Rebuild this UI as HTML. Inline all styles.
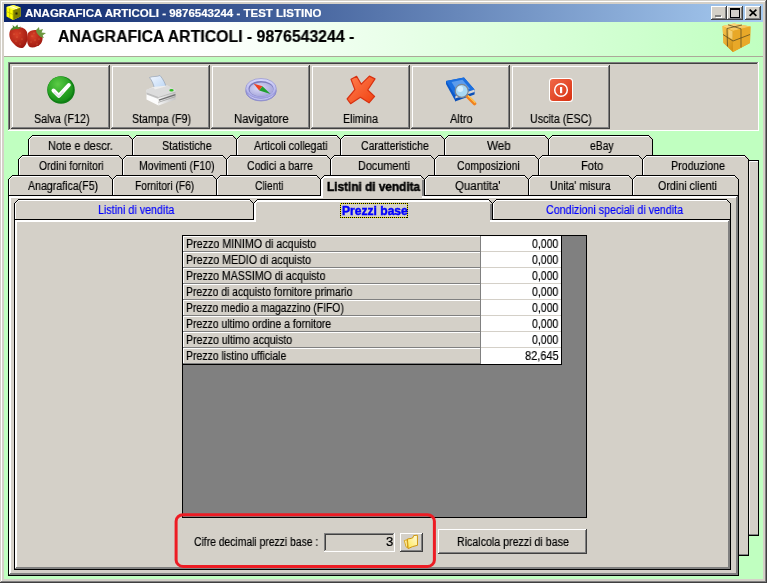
<!DOCTYPE html>
<html><head><meta charset="utf-8"><title>ANAGRAFICA ARTICOLI</title>
<style>
html,body{margin:0;padding:0;}
body{width:767px;height:583px;position:relative;overflow:hidden;background:#D4D0C8;font-family:'Liberation Sans', sans-serif;}
#frame{position:absolute;left:0;top:0;}
.t{position:absolute;white-space:pre;transform-origin:0 0;will-change:transform;-webkit-text-stroke:0.18px currentColor;}
#title{position:absolute;left:4px;top:4px;width:759px;height:18px;background:linear-gradient(90deg,#0A246A 0%,#A6CAF0 100%);}
#header{position:absolute;left:4px;top:22px;width:759px;height:34px;background:linear-gradient(90deg,#FFFFFF 0%,#FFFFFF 25%,#C0FFC0 100%);}
.ic{position:absolute;}
</style></head>
<body>
<svg id="frame" width="767" height="583" viewBox="0 0 767 583" shape-rendering="crispEdges">
<rect x="0" y="0" width="767" height="583" fill="#D4D0C8"/>
<rect x="1" y="1" width="765" height="1" fill="#fff"/>
<rect x="1" y="1" width="1" height="581" fill="#fff"/>
<rect x="0" y="582" width="767" height="1" fill="#404040"/>
<rect x="766" y="0" width="1" height="583" fill="#404040"/>
<rect x="1" y="581" width="765" height="1" fill="#808080"/>
<rect x="765" y="1" width="1" height="581" fill="#808080"/>
<rect x="4" y="57" width="759" height="522" fill="#C0FFC0"/>
<rect x="4" y="56" width="759" height="1" fill="#ACA899"/>
<rect x="8" y="62" width="751" height="69" fill="#D4D0C8"/>
<rect x="8" y="62" width="751" height="1" fill="#808080"/>
<rect x="8" y="62" width="1" height="69" fill="#808080"/>
<rect x="9" y="63" width="749" height="1" fill="#404040"/>
<rect x="9" y="63" width="1" height="67" fill="#404040"/>
<rect x="8" y="130" width="751" height="1" fill="#fff"/>
<rect x="758" y="62" width="1" height="69" fill="#fff"/>
<rect x="9" y="129" width="749" height="1" fill="#D4D0C8"/>
<rect x="757" y="63" width="1" height="67" fill="#D4D0C8"/>
<rect x="12" y="66" width="1" height="62" fill="#fff"/>
<rect x="12" y="66" width="97" height="1" fill="#fff"/>
<rect x="11" y="128" width="99" height="1" fill="#404040"/>
<rect x="109" y="65" width="1" height="64" fill="#404040"/>
<rect x="12" y="127" width="97" height="1" fill="#808080"/>
<rect x="108" y="66" width="1" height="62" fill="#808080"/>
<rect x="112" y="66" width="1" height="62" fill="#fff"/>
<rect x="112" y="66" width="97" height="1" fill="#fff"/>
<rect x="111" y="128" width="99" height="1" fill="#404040"/>
<rect x="209" y="65" width="1" height="64" fill="#404040"/>
<rect x="112" y="127" width="97" height="1" fill="#808080"/>
<rect x="208" y="66" width="1" height="62" fill="#808080"/>
<rect x="212" y="66" width="1" height="62" fill="#fff"/>
<rect x="212" y="66" width="97" height="1" fill="#fff"/>
<rect x="211" y="128" width="99" height="1" fill="#404040"/>
<rect x="309" y="65" width="1" height="64" fill="#404040"/>
<rect x="212" y="127" width="97" height="1" fill="#808080"/>
<rect x="308" y="66" width="1" height="62" fill="#808080"/>
<rect x="312" y="66" width="1" height="62" fill="#fff"/>
<rect x="312" y="66" width="97" height="1" fill="#fff"/>
<rect x="311" y="128" width="99" height="1" fill="#404040"/>
<rect x="409" y="65" width="1" height="64" fill="#404040"/>
<rect x="312" y="127" width="97" height="1" fill="#808080"/>
<rect x="408" y="66" width="1" height="62" fill="#808080"/>
<rect x="412" y="66" width="1" height="62" fill="#fff"/>
<rect x="412" y="66" width="97" height="1" fill="#fff"/>
<rect x="411" y="128" width="99" height="1" fill="#404040"/>
<rect x="509" y="65" width="1" height="64" fill="#404040"/>
<rect x="412" y="127" width="97" height="1" fill="#808080"/>
<rect x="508" y="66" width="1" height="62" fill="#808080"/>
<rect x="512" y="66" width="1" height="62" fill="#fff"/>
<rect x="512" y="66" width="97" height="1" fill="#fff"/>
<rect x="511" y="128" width="99" height="1" fill="#404040"/>
<rect x="609" y="65" width="1" height="64" fill="#404040"/>
<rect x="512" y="127" width="97" height="1" fill="#808080"/>
<rect x="608" y="66" width="1" height="62" fill="#808080"/>
<rect x="740" y="160" width="19" height="376" fill="#D4D0C8"/>
<rect x="740" y="160" width="19" height="1" fill="#000"/>
<rect x="758" y="160" width="1" height="376" fill="#000"/>
<rect x="740" y="535" width="19" height="1" fill="#000"/>
<rect x="749" y="161" width="9" height="1" fill="#fff"/>
<rect x="749" y="161" width="1" height="374" fill="#F0EEEA"/>
<rect x="730" y="170" width="19" height="386" fill="#D4D0C8"/>
<rect x="748" y="159" width="1" height="397" fill="#000"/>
<rect x="730" y="555" width="19" height="1" fill="#000"/>
<rect x="739" y="554" width="9" height="1" fill="#808080"/>
<rect x="749" y="534" width="9" height="1" fill="#808080"/>
<path d="M28,162 L28,139 L32,135 L129,135 L133,139 L133,162Z" fill="#D4D0C8" stroke="none"/>
<path d="M29.5,156 L29.5,139.5 L32.5,136.5 L128.5,136.5" stroke="#fff" fill="none" stroke-width="1" shape-rendering="crispEdges"/>
<path d="M28.5,156 L28.5,139.5 L32.5,135.5 L128.5,135.5 L132.5,139.5 L132.5,156" stroke="#000" fill="none" stroke-width="1" />
<path d="M132,162 L132,139 L136,135 L233,135 L237,139 L237,162Z" fill="#D4D0C8" stroke="none"/>
<path d="M133.5,156 L133.5,139.5 L136.5,136.5 L232.5,136.5" stroke="#fff" fill="none" stroke-width="1" shape-rendering="crispEdges"/>
<path d="M132.5,156 L132.5,139.5 L136.5,135.5 L232.5,135.5 L236.5,139.5 L236.5,156" stroke="#000" fill="none" stroke-width="1" />
<path d="M236,162 L236,139 L240,135 L337,135 L341,139 L341,162Z" fill="#D4D0C8" stroke="none"/>
<path d="M237.5,156 L237.5,139.5 L240.5,136.5 L336.5,136.5" stroke="#fff" fill="none" stroke-width="1" shape-rendering="crispEdges"/>
<path d="M236.5,156 L236.5,139.5 L240.5,135.5 L336.5,135.5 L340.5,139.5 L340.5,156" stroke="#000" fill="none" stroke-width="1" />
<path d="M340,162 L340,139 L344,135 L441,135 L445,139 L445,162Z" fill="#D4D0C8" stroke="none"/>
<path d="M341.5,156 L341.5,139.5 L344.5,136.5 L440.5,136.5" stroke="#fff" fill="none" stroke-width="1" shape-rendering="crispEdges"/>
<path d="M340.5,156 L340.5,139.5 L344.5,135.5 L440.5,135.5 L444.5,139.5 L444.5,156" stroke="#000" fill="none" stroke-width="1" />
<path d="M444,162 L444,139 L448,135 L545,135 L549,139 L549,162Z" fill="#D4D0C8" stroke="none"/>
<path d="M445.5,156 L445.5,139.5 L448.5,136.5 L544.5,136.5" stroke="#fff" fill="none" stroke-width="1" shape-rendering="crispEdges"/>
<path d="M444.5,156 L444.5,139.5 L448.5,135.5 L544.5,135.5 L548.5,139.5 L548.5,156" stroke="#000" fill="none" stroke-width="1" />
<path d="M548,162 L548,139 L552,135 L649,135 L653,139 L653,162Z" fill="#D4D0C8" stroke="none"/>
<path d="M549.5,156 L549.5,139.5 L552.5,136.5 L648.5,136.5" stroke="#fff" fill="none" stroke-width="1" shape-rendering="crispEdges"/>
<path d="M548.5,156 L548.5,139.5 L552.5,135.5 L648.5,135.5 L652.5,139.5 L652.5,156" stroke="#000" fill="none" stroke-width="1" />
<path d="M18,182 L18,159 L22,155 L119,155 L123,159 L123,182Z" fill="#D4D0C8" stroke="none"/>
<path d="M19.5,176 L19.5,159.5 L22.5,156.5 L118.5,156.5" stroke="#fff" fill="none" stroke-width="1" shape-rendering="crispEdges"/>
<path d="M18.5,176 L18.5,159.5 L22.5,155.5 L118.5,155.5 L122.5,159.5 L122.5,176" stroke="#000" fill="none" stroke-width="1" />
<path d="M122,182 L122,159 L126,155 L223,155 L227,159 L227,182Z" fill="#D4D0C8" stroke="none"/>
<path d="M123.5,176 L123.5,159.5 L126.5,156.5 L222.5,156.5" stroke="#fff" fill="none" stroke-width="1" shape-rendering="crispEdges"/>
<path d="M122.5,176 L122.5,159.5 L126.5,155.5 L222.5,155.5 L226.5,159.5 L226.5,176" stroke="#000" fill="none" stroke-width="1" />
<path d="M226,182 L226,159 L230,155 L327,155 L331,159 L331,182Z" fill="#D4D0C8" stroke="none"/>
<path d="M227.5,176 L227.5,159.5 L230.5,156.5 L326.5,156.5" stroke="#fff" fill="none" stroke-width="1" shape-rendering="crispEdges"/>
<path d="M226.5,176 L226.5,159.5 L230.5,155.5 L326.5,155.5 L330.5,159.5 L330.5,176" stroke="#000" fill="none" stroke-width="1" />
<path d="M330,182 L330,159 L334,155 L431,155 L435,159 L435,182Z" fill="#D4D0C8" stroke="none"/>
<path d="M331.5,176 L331.5,159.5 L334.5,156.5 L430.5,156.5" stroke="#fff" fill="none" stroke-width="1" shape-rendering="crispEdges"/>
<path d="M330.5,176 L330.5,159.5 L334.5,155.5 L430.5,155.5 L434.5,159.5 L434.5,176" stroke="#000" fill="none" stroke-width="1" />
<path d="M434,182 L434,159 L438,155 L535,155 L539,159 L539,182Z" fill="#D4D0C8" stroke="none"/>
<path d="M435.5,176 L435.5,159.5 L438.5,156.5 L534.5,156.5" stroke="#fff" fill="none" stroke-width="1" shape-rendering="crispEdges"/>
<path d="M434.5,176 L434.5,159.5 L438.5,155.5 L534.5,155.5 L538.5,159.5 L538.5,176" stroke="#000" fill="none" stroke-width="1" />
<path d="M538,182 L538,159 L542,155 L639,155 L643,159 L643,182Z" fill="#D4D0C8" stroke="none"/>
<path d="M539.5,176 L539.5,159.5 L542.5,156.5 L638.5,156.5" stroke="#fff" fill="none" stroke-width="1" shape-rendering="crispEdges"/>
<path d="M538.5,176 L538.5,159.5 L542.5,155.5 L638.5,155.5 L642.5,159.5 L642.5,176" stroke="#000" fill="none" stroke-width="1" />
<path d="M642,182 L642,159 L646,155 L745,155 L749,159 L749,182Z" fill="#D4D0C8" stroke="none"/>
<path d="M643.5,176 L643.5,159.5 L646.5,156.5 L744.5,156.5" stroke="#fff" fill="none" stroke-width="1" shape-rendering="crispEdges"/>
<path d="M642.5,176 L642.5,159.5 L646.5,155.5 L744.5,155.5 L748.5,159.5 L748.5,176" stroke="#000" fill="none" stroke-width="1" />
<rect x="748" y="159" width="1" height="397" fill="#000"/>
<rect x="8" y="195" width="731" height="381" fill="#D4D0C8"/>
<rect x="8" y="195" width="1" height="381" fill="#000"/>
<rect x="738" y="195" width="1" height="381" fill="#000"/>
<rect x="8" y="575" width="731" height="1" fill="#000"/>
<rect x="8" y="195" width="731" height="1" fill="#000"/>
<rect x="9" y="196" width="729" height="1" fill="#fff"/>
<rect x="9" y="197" width="729" height="1" fill="#fff"/>
<rect x="9" y="196" width="1" height="379" fill="#fff"/>
<rect x="10" y="196" width="1" height="378" fill="#fff"/>
<rect x="737" y="196" width="1" height="379" fill="#808080"/>
<rect x="736" y="197" width="1" height="378" fill="#808080"/>
<rect x="9" y="574" width="729" height="1" fill="#808080"/>
<rect x="10" y="573" width="728" height="1" fill="#808080"/>
<rect x="321" y="195" width="101" height="1" fill="#D4D0C8"/>
<rect x="321" y="195" width="2" height="3" fill="#fff"/>
<rect x="323" y="196" width="99" height="2" fill="#D4D0C8"/>
<rect x="422" y="195" width="2" height="1" fill="#808080"/>
<path d="M8,196 L8,179 L12,175 L109,175 L113,179 L113,196Z" fill="#D4D0C8" stroke="none"/>
<path d="M9.5,196 L9.5,179.5 L12.5,176.5 L108.5,176.5" stroke="#fff" fill="none" stroke-width="1" shape-rendering="crispEdges"/>
<path d="M8.5,196 L8.5,179.5 L12.5,175.5 L108.5,175.5 L112.5,179.5 L112.5,196" stroke="#000" fill="none" stroke-width="1" />
<rect x="8" y="195" width="105" height="1" fill="#000"/>
<path d="M112,196 L112,179 L116,175 L213,175 L217,179 L217,196Z" fill="#D4D0C8" stroke="none"/>
<path d="M113.5,196 L113.5,179.5 L116.5,176.5 L212.5,176.5" stroke="#fff" fill="none" stroke-width="1" shape-rendering="crispEdges"/>
<path d="M112.5,196 L112.5,179.5 L116.5,175.5 L212.5,175.5 L216.5,179.5 L216.5,196" stroke="#000" fill="none" stroke-width="1" />
<rect x="112" y="195" width="105" height="1" fill="#000"/>
<path d="M216,196 L216,179 L220,175 L317,175 L321,179 L321,196Z" fill="#D4D0C8" stroke="none"/>
<path d="M217.5,196 L217.5,179.5 L220.5,176.5 L316.5,176.5" stroke="#fff" fill="none" stroke-width="1" shape-rendering="crispEdges"/>
<path d="M216.5,196 L216.5,179.5 L220.5,175.5 L316.5,175.5 L320.5,179.5 L320.5,196" stroke="#000" fill="none" stroke-width="1" />
<rect x="216" y="195" width="105" height="1" fill="#000"/>
<path d="M424,196 L424,179 L428,175 L525,175 L529,179 L529,196Z" fill="#D4D0C8" stroke="none"/>
<path d="M425.5,196 L425.5,179.5 L428.5,176.5 L524.5,176.5" stroke="#fff" fill="none" stroke-width="1" shape-rendering="crispEdges"/>
<path d="M424.5,196 L424.5,179.5 L428.5,175.5 L524.5,175.5 L528.5,179.5 L528.5,196" stroke="#000" fill="none" stroke-width="1" />
<rect x="424" y="195" width="105" height="1" fill="#000"/>
<path d="M528,196 L528,179 L532,175 L629,175 L633,179 L633,196Z" fill="#D4D0C8" stroke="none"/>
<path d="M529.5,196 L529.5,179.5 L532.5,176.5 L628.5,176.5" stroke="#fff" fill="none" stroke-width="1" shape-rendering="crispEdges"/>
<path d="M528.5,196 L528.5,179.5 L532.5,175.5 L628.5,175.5 L632.5,179.5 L632.5,196" stroke="#000" fill="none" stroke-width="1" />
<rect x="528" y="195" width="105" height="1" fill="#000"/>
<path d="M632,196 L632,179 L636,175 L735,175 L739,179 L739,196Z" fill="#D4D0C8" stroke="none"/>
<path d="M633.5,196 L633.5,179.5 L636.5,176.5 L734.5,176.5" stroke="#fff" fill="none" stroke-width="1" shape-rendering="crispEdges"/>
<path d="M632.5,196 L632.5,179.5 L636.5,175.5 L734.5,175.5 L738.5,179.5 L738.5,196" stroke="#000" fill="none" stroke-width="1" />
<rect x="632" y="195" width="107" height="1" fill="#000"/>
<path d="M320,196 L320,179 L324,175 L421,175 L425,179 L425,196Z" fill="#D4D0C8" stroke="none"/>
<path d="M321.5,196 L321.5,179.5 L324.5,176.5 L420.5,176.5" stroke="#fff" fill="none" stroke-width="1" shape-rendering="crispEdges"/>
<path d="M322.5,196 L322.5,179.5 L324.5,177.5 L420.5,177.5" stroke="#fff" fill="none" stroke-width="1" shape-rendering="crispEdges"/>
<path d="M423.5,179.5 L423.5,196" stroke="#808080" fill="none" stroke-width="1" shape-rendering="crispEdges"/>
<path d="M422.5,179.5 L422.5,196" stroke="#808080" fill="none" stroke-width="1" shape-rendering="crispEdges"/>
<path d="M320.5,196 L320.5,179.5 L324.5,175.5 L420.5,175.5 L424.5,179.5 L424.5,196" stroke="#000" fill="none" stroke-width="1" />
<rect x="14" y="219" width="717" height="351" fill="#D4D0C8"/>
<rect x="14" y="219" width="1" height="351" fill="#000"/>
<rect x="730" y="219" width="1" height="351" fill="#000"/>
<rect x="14" y="569" width="717" height="1" fill="#000"/>
<rect x="14" y="219" width="717" height="1" fill="#000"/>
<rect x="15" y="220" width="715" height="1" fill="#fff"/>
<rect x="15" y="221" width="715" height="1" fill="#fff"/>
<rect x="15" y="220" width="1" height="349" fill="#fff"/>
<rect x="16" y="220" width="1" height="348" fill="#fff"/>
<rect x="729" y="220" width="1" height="349" fill="#808080"/>
<rect x="728" y="221" width="1" height="348" fill="#808080"/>
<rect x="15" y="568" width="715" height="1" fill="#808080"/>
<rect x="16" y="567" width="714" height="1" fill="#808080"/>
<rect x="254" y="219" width="236" height="1" fill="#D4D0C8"/>
<rect x="254" y="219" width="2" height="3" fill="#fff"/>
<rect x="256" y="220" width="234" height="2" fill="#D4D0C8"/>
<rect x="490" y="219" width="2" height="1" fill="#808080"/>
<path d="M14,220 L14,203 L18,199 L250,199 L254,203 L254,220Z" fill="#D4D0C8" stroke="none"/>
<path d="M15.5,220 L15.5,203.5 L18.5,200.5 L249.5,200.5" stroke="#fff" fill="none" stroke-width="1" shape-rendering="crispEdges"/>
<path d="M14.5,220 L14.5,203.5 L18.5,199.5 L249.5,199.5 L253.5,203.5 L253.5,220" stroke="#000" fill="none" stroke-width="1" />
<rect x="14" y="219" width="240" height="1" fill="#000"/>
<path d="M492,220 L492,203 L496,199 L727,199 L731,203 L731,220Z" fill="#D4D0C8" stroke="none"/>
<path d="M493.5,220 L493.5,203.5 L496.5,200.5 L726.5,200.5" stroke="#fff" fill="none" stroke-width="1" shape-rendering="crispEdges"/>
<path d="M492.5,220 L492.5,203.5 L496.5,199.5 L726.5,199.5 L730.5,203.5 L730.5,220" stroke="#000" fill="none" stroke-width="1" />
<rect x="492" y="219" width="239" height="1" fill="#000"/>
<path d="M253,220 L253,203 L257,199 L489,199 L493,203 L493,220Z" fill="#D4D0C8" stroke="none"/>
<path d="M254.5,220 L254.5,203.5 L257.5,200.5 L488.5,200.5" stroke="#fff" fill="none" stroke-width="1" shape-rendering="crispEdges"/>
<path d="M255.5,220 L255.5,203.5 L257.5,201.5 L488.5,201.5" stroke="#fff" fill="none" stroke-width="1" shape-rendering="crispEdges"/>
<path d="M491.5,203.5 L491.5,220" stroke="#808080" fill="none" stroke-width="1" shape-rendering="crispEdges"/>
<path d="M490.5,203.5 L490.5,220" stroke="#808080" fill="none" stroke-width="1" shape-rendering="crispEdges"/>
<path d="M253.5,220 L253.5,203.5 L257.5,199.5 L488.5,199.5 L492.5,203.5 L492.5,220" stroke="#000" fill="none" stroke-width="1" />
<rect x="253" y="203" width="1" height="17" fill="#000"/>
<rect x="250" y="219" width="4" height="1" fill="#000"/>
<rect x="182" y="235" width="405" height="283" fill="#808080"/>
<rect x="182" y="235" width="405" height="1" fill="#000"/>
<rect x="182" y="517" width="405" height="1" fill="#000"/>
<rect x="182" y="235" width="1" height="283" fill="#000"/>
<rect x="586" y="235" width="1" height="283" fill="#000"/>
<rect x="183" y="236" width="298" height="128" fill="#D4D0C8"/>
<rect x="481" y="236" width="80" height="128" fill="#fff"/>
<rect x="480" y="236" width="1" height="128" fill="#808080"/>
<rect x="183" y="236" width="1" height="128" fill="#fff"/>
<rect x="183" y="236" width="297" height="1" fill="#fff"/>
<rect x="183" y="251" width="298" height="1" fill="#808080"/>
<rect x="481" y="251" width="80" height="1" fill="#D4D0C8"/>
<rect x="183" y="252" width="297" height="1" fill="#fff"/>
<rect x="183" y="267" width="298" height="1" fill="#808080"/>
<rect x="481" y="267" width="80" height="1" fill="#D4D0C8"/>
<rect x="183" y="268" width="297" height="1" fill="#fff"/>
<rect x="183" y="283" width="298" height="1" fill="#808080"/>
<rect x="481" y="283" width="80" height="1" fill="#D4D0C8"/>
<rect x="183" y="284" width="297" height="1" fill="#fff"/>
<rect x="183" y="299" width="298" height="1" fill="#808080"/>
<rect x="481" y="299" width="80" height="1" fill="#D4D0C8"/>
<rect x="183" y="300" width="297" height="1" fill="#fff"/>
<rect x="183" y="315" width="298" height="1" fill="#808080"/>
<rect x="481" y="315" width="80" height="1" fill="#D4D0C8"/>
<rect x="183" y="316" width="297" height="1" fill="#fff"/>
<rect x="183" y="331" width="298" height="1" fill="#808080"/>
<rect x="481" y="331" width="80" height="1" fill="#D4D0C8"/>
<rect x="183" y="332" width="297" height="1" fill="#fff"/>
<rect x="183" y="347" width="298" height="1" fill="#808080"/>
<rect x="481" y="347" width="80" height="1" fill="#D4D0C8"/>
<rect x="183" y="348" width="297" height="1" fill="#fff"/>
<rect x="183" y="363" width="298" height="1" fill="#808080"/>
<rect x="561" y="236" width="1" height="129" fill="#000"/>
<rect x="183" y="364" width="379" height="1" fill="#000"/>
<rect x="324" y="533" width="71" height="19" fill="#D4D0C8"/>
<rect x="324" y="533" width="70" height="1" fill="#808080"/>
<rect x="324" y="533" width="1" height="18" fill="#808080"/>
<rect x="325" y="534" width="68" height="1" fill="#404040"/>
<rect x="325" y="534" width="1" height="16" fill="#404040"/>
<rect x="324" y="551" width="71" height="1" fill="#fff"/>
<rect x="394" y="533" width="1" height="19" fill="#fff"/>
<rect x="400" y="533" width="23" height="19" fill="#D4D0C8"/>
<rect x="400" y="533" width="22" height="1" fill="#fff"/>
<rect x="400" y="533" width="1" height="18" fill="#fff"/>
<rect x="400" y="551" width="23" height="1" fill="#404040"/>
<rect x="422" y="533" width="1" height="19" fill="#404040"/>
<rect x="401" y="550" width="21" height="1" fill="#808080"/>
<rect x="421" y="534" width="1" height="17" fill="#808080"/>
<rect x="438" y="529" width="149" height="25" fill="#D4D0C8"/>
<rect x="438" y="529" width="148" height="1" fill="#fff"/>
<rect x="438" y="529" width="1" height="24" fill="#fff"/>
<rect x="438" y="553" width="149" height="1" fill="#404040"/>
<rect x="586" y="529" width="1" height="25" fill="#404040"/>
<rect x="439" y="552" width="147" height="1" fill="#808080"/>
<rect x="585" y="530" width="1" height="23" fill="#808080"/>
<rect x="340.5" y="203.5" width="67" height="14" fill="none" stroke="#E8E000" stroke-width="1"/>
<rect x="340.5" y="203.5" width="67" height="14" fill="none" stroke="#000" stroke-width="1" stroke-dasharray="1 1"/>
<rect x="176.1" y="514.8" width="258.3" height="51.6" rx="7" ry="6.5" fill="none" stroke="#ED1C24" stroke-width="3" shape-rendering="auto"/>
</svg>
<div id="title"></div>
<div id="header"></div>
<!-- title bar icon -->
<svg class="ic" style="left:5px;top:4px" width="17" height="17" viewBox="0 0 17 17">
  <polygon points="1.5,3 8.5,1 15.5,3.5 15.5,12.5 8,16 1.5,12.5" fill="#FFFF00"/>
  <polygon points="8,6 15.5,3.5 15.5,12.5 8,16" fill="#808000"/>
  <polygon points="1.5,3 8.5,1 15.5,3.5 8,6" fill="#FFFF60"/>
  <path d="M1.5,7.5 L8,10.5 M4.7,4.5 L4.7,14.2 M8,6 L8,16" stroke="#C0C000" stroke-width="0.8" fill="none"/>
  <rect x="10.5" y="8.5" width="2" height="2" fill="#202000"/>
  <path d="M5,2.2 L12,4.8" stroke="#fff" stroke-width="0.8"/>
</svg>
<!-- title bar buttons -->
<svg class="ic" style="left:711px;top:6px" width="50" height="14" viewBox="0 0 50 14" shape-rendering="crispEdges">
  <g id="tb">
    <rect x="0" y="0" width="16" height="14" fill="#D4D0C8"/>
    <rect x="0" y="0" width="15" height="1" fill="#fff"/><rect x="0" y="0" width="1" height="13" fill="#fff"/>
    <rect x="0" y="13" width="16" height="1" fill="#404040"/><rect x="15" y="0" width="1" height="14" fill="#404040"/>
    <rect x="1" y="12" width="14" height="1" fill="#808080"/><rect x="14" y="1" width="1" height="12" fill="#808080"/>
  </g>
  <use href="#tb" x="16"/>
  <use href="#tb" x="34"/>
  <rect x="5" y="10" width="6" height="2" fill="#fff"/>
  <rect x="4" y="9" width="6" height="2" fill="#808080"/>
  <rect x="19" y="2" width="9" height="9" fill="none" stroke="#000" stroke-width="1" transform="translate(.5,.5)"/>
  <rect x="19" y="2" width="10" height="2" fill="#000"/>
  <path d="M38.6,3.6 L45.4,9.9 M45.4,3.6 L38.6,9.9" stroke="#000" stroke-width="1.7" fill="none" shape-rendering="auto"/>
</svg>
<!-- strawberries -->
<svg class="ic" style="left:8px;top:24px" width="40" height="28" viewBox="0 0 40 28">
  <defs>
    <radialGradient id="sb1" cx="0.4" cy="0.35" r="0.7"><stop offset="0" stop-color="#D84028"/><stop offset="1" stop-color="#9C1810"/></radialGradient>
  </defs>
  <path d="M3,5 C0,9 1,16 6,20 C9,23.5 13,25 15.5,23.5 C19,21 20.5,14 19,8 C17.5,3.5 12,2.5 8,3.5 C6,3.5 4,4 3,5Z" fill="url(#sb1)"/>
  <path d="M20,9 C18.5,13 18.5,19 21,22.5 C24,24.5 30,23 33,19.5 C35.5,16 35,10 32,7.5 C28,5 22.5,6 20,9Z" fill="url(#sb1)"/>
  <path d="M2.5,6.5 L5,3 L4.5,1 L7,3 L9.5,0.5 L10,3.5 L13,2.5 L11,5 L7,5 Z" fill="#4C8A2C"/>
  <path d="M28,6 L31,3 L31.5,6 L35,5 L33.5,8.5 L38,9 L34.5,11.5 L36,14 L32.5,13 L30,10.5 L28.5,8.5Z" fill="#6C9840"/>
  <g fill="#F0A060" opacity="0.7">
    <circle cx="6" cy="10" r=".5"/><circle cx="9" cy="13" r=".5"/><circle cx="12" cy="9" r=".5"/><circle cx="14" cy="15" r=".5"/>
    <circle cx="8" cy="17" r=".5"/><circle cx="12" cy="20" r=".5"/><circle cx="24" cy="12" r=".5"/><circle cx="27" cy="16" r=".5"/>
    <circle cx="23" cy="18" r=".5"/><circle cx="29" cy="20" r=".5"/><circle cx="26" cy="9" r=".5"/><circle cx="31" cy="15" r=".5"/>
  </g>
</svg>
<!-- gold cube -->
<svg class="ic" style="left:720px;top:22px" width="33" height="32" viewBox="0 0 33 32">
  <defs>
    <linearGradient id="gc1" x1="0" y1="0" x2="1" y2="1"><stop offset="0" stop-color="#F8C850"/><stop offset="1" stop-color="#D08C10"/></linearGradient>
    <linearGradient id="gc2" x1="0" y1="0" x2="0" y2="1"><stop offset="0" stop-color="#F0B030"/><stop offset="1" stop-color="#E09818"/></linearGradient>
    <linearGradient id="gc3" x1="0" y1="0" x2="1" y2="1"><stop offset="0" stop-color="#FFE090"/><stop offset="1" stop-color="#F0B840"/></linearGradient>
  </defs>
  <polygon points="2.5,4 14,1.5 30.5,4.5 30,21 13,30 3.5,21" fill="url(#gc2)"/>
  <polygon points="2.5,4 14,1.5 30.5,4.5 13,9" fill="url(#gc3)"/>
  <polygon points="2.5,4 13,9 13,30 3.5,21" fill="url(#gc1)"/>
  <polygon points="13,9 30.5,4.5 30,21 13,30" fill="#E8A828"/>
  <path d="M3,12.5 L13,19 L30,12.5 M7,6.5 L7.5,24.5 M21,6.8 L21,25.5 M8,2.8 L21,6.8 M22,3 L7,6.5" stroke="#5A4A20" stroke-width="0.9" fill="none" opacity=".85"/>
  <polygon points="8.5,7.5 12.5,9.3 12.5,17.5 8.5,15" fill="#FFE8A0" opacity=".6"/>
</svg>
<!-- toolbar icon 1: check -->
<svg class="ic" style="left:45px;top:74px" width="32" height="32" viewBox="0 0 32 32">
  <defs>
    <radialGradient id="ck" cx="0.4" cy="0.3" r="0.75"><stop offset="0" stop-color="#5CCB46"/><stop offset="0.6" stop-color="#2AA524"/><stop offset="1" stop-color="#158A18"/></radialGradient>
  </defs>
  <circle cx="16" cy="16" r="13.8" fill="#0F7F14"/><circle cx="15.3" cy="15.2" r="12.6" fill="url(#ck)"/>
  <path d="M8.5,16.5 L13.8,21.8 L23.8,11" stroke="#fff" stroke-width="4" fill="none" stroke-linecap="round" stroke-linejoin="round"/>
  <path d="M9.5,18.5 L13.8,22.6 L18,18" stroke="#D8D8E0" stroke-width="1.6" fill="none" stroke-linecap="round" opacity=".8"/>
</svg>
<!-- toolbar icon 2: printer -->
<svg class="ic" style="left:145px;top:73px" width="33" height="33" viewBox="0 0 33 33">
  <defs>
    <linearGradient id="pp" x1="0" y1="0" x2="1" y2="1"><stop offset="0" stop-color="#F4F8FF"/><stop offset="1" stop-color="#B8D4F4"/></linearGradient>
    <linearGradient id="pb" x1="0" y1="0" x2="1" y2="0"><stop offset="0" stop-color="#F4F4F4"/><stop offset="1" stop-color="#C4C4C4"/></linearGradient>
  </defs>
  <path d="M4.5,4.5 C8,3 12,4 15,2.5 C18,6 20,10 21,13.5 L9.5,16.5 C9,12 7,7.5 4.5,4.5Z" fill="url(#pp)" stroke="#8898B0" stroke-width=".6"/>
  <polygon points="1.5,17 8,14 22,12.5 30.5,17.5 13.5,24 1.5,20" fill="#EEEEEE"/>
  <polygon points="1.5,16.5 8.5,14.5 10,16.5 20.5,13.5 22,12 30.5,17 30.5,19 13.5,24.5 1.5,20" fill="#DCDCDC"/>
  <polygon points="1.5,20 13.5,24.5 13.5,32.5 1.5,26.5" fill="#FCFCFC"/><polygon points="1.5,20 13.5,24.5 13.5,26 1.5,21.5" fill="#C4C4C4"/>
  <polygon points="13.5,24.5 30.5,19 30.5,26.5 13.5,32.5" fill="url(#pb)"/>
  <path d="M14,27.2 L30.5,21.6" stroke="#707070" stroke-width="1.4"/><path d="M13.5,29.3 L30.5,23.6" stroke="#A0A0A0" stroke-width=".8"/>
  <path d="M1.5,20 L13.5,24.5 L30.5,19" stroke="#B0B0B0" stroke-width=".7" fill="none"/>
  <ellipse cx="26.5" cy="17.3" rx="2.2" ry="1.3" fill="#30C020"/>
</svg>
<!-- toolbar icon 3: compass -->
<svg class="ic" style="left:244px;top:76px" width="34" height="28" viewBox="0 0 34 28">
  <defs>
    <linearGradient id="cp1" x1="0" y1="0" x2="0" y2="1"><stop offset="0" stop-color="#D8D8FC"/><stop offset="1" stop-color="#A4A4E4"/></linearGradient>
    <radialGradient id="cp2" cx="0.4" cy="0.4" r="0.7"><stop offset="0" stop-color="#DCDCF8"/><stop offset="1" stop-color="#A0A0D8"/></radialGradient>
  </defs>
  <ellipse cx="17" cy="15" rx="15.3" ry="10" fill="#9C9CDC" stroke="#7C7CC4" stroke-width=".6"/>
  <ellipse cx="17" cy="16.2" rx="13" ry="7.6" fill="#E4E4FF" opacity=".7"/>
  <ellipse cx="17" cy="12.5" rx="15.3" ry="10" fill="url(#cp1)" stroke="#8888CC" stroke-width=".6"/>
  <ellipse cx="17" cy="12.8" rx="12.5" ry="7.8" fill="#7C7CBC"/>
  <ellipse cx="17.4" cy="13.5" rx="11.8" ry="7.1" fill="url(#cp2)"/>
  <polygon points="9.5,7.5 18.5,10.2 15.2,14.5" fill="#F04020"/>
  <polygon points="18.5,10.2 15.2,14.5 26.5,18" fill="#20A030"/>
</svg>
<!-- toolbar icon 4: X -->
<svg class="ic" style="left:345px;top:74px" width="32" height="32" viewBox="0 0 32 32">
  <defs>
    <linearGradient id="xx" x1="0" y1="0" x2="1" y2="1"><stop offset="0" stop-color="#FF8050"/><stop offset="1" stop-color="#F04010"/></linearGradient>
  </defs>
  <path d="M6,5.3 L11.6,2.3 L16.3,10.2 L24.4,2.1 L30,4.9 L22.7,16 L29.6,22.4 L24,28.8 L15.4,23.3 L5.6,29.7 L2.1,25 L9.9,15.6 Z" fill="url(#xx)" stroke="#D83010" stroke-width="1.2" stroke-linejoin="round"/>
</svg>
<!-- toolbar icon 5: book + magnifier -->
<svg class="ic" style="left:445px;top:76px" width="33" height="30" viewBox="0 0 33 30">
  <polygon points="1,5 19,1.5 29.5,13.5 29.5,17.5 10,24.5 1,8" fill="#0C58C8"/>
  <polygon points="1,5 19,1.5 29.5,13.5 10.5,20" fill="#1C70E0"/>
  <polygon points="6.5,6 17.5,3.8 25,12.8 13,16.5" fill="#5C9CEC"/>
  <polygon points="10.5,20 29.5,13.5 29.5,17.5 10,24.5" fill="#D8D8D8"/>
  <polygon points="10,22.5 29.5,16 29.5,18.5 10,25.5" fill="#0C50B8"/>
  <path d="M22.5,20.5 L29.5,27.5" stroke="#F08020" stroke-width="3.6" stroke-linecap="round"/>
  <path d="M23.5,20 L30,26.5" stroke="#FFC850" stroke-width="1.2" stroke-linecap="round"/>
  <circle cx="16.7" cy="14.9" r="6.5" fill="#A8D8F4" stroke="#808890" stroke-width="1.2"/>
  <circle cx="15.2" cy="13" r="3" fill="#E0F4FF" opacity=".8"/>
</svg>
<!-- toolbar icon 6: power -->
<svg class="ic" style="left:548px;top:77px" width="26" height="26" viewBox="0 0 26 26">
  <defs>
    <linearGradient id="pw" x1="0" y1="0" x2="1" y2="1"><stop offset="0" stop-color="#F06848"/><stop offset="1" stop-color="#D83010"/></linearGradient>
  </defs>
  <rect x="1" y="1" width="24" height="24" rx="3.5" fill="#fff"/>
  <rect x="2" y="2" width="22" height="22" rx="3" fill="url(#pw)"/>
  <circle cx="13" cy="13" r="6.3" fill="none" stroke="#fff" stroke-width="1.5"/>
  <rect x="12" y="10" width="2.2" height="6.2" fill="#fff"/>
</svg>
<!-- folder -->
<svg class="ic" style="left:403px;top:534px" width="17" height="16" viewBox="0 0 17 16">
  <defs><linearGradient id="fo" x1="0" y1="1" x2="1" y2="0"><stop offset="0" stop-color="#FFE850"/><stop offset="1" stop-color="#FFFCE0"/></linearGradient></defs>
  <path d="M1.3,6.5 L4,5.8 L4.6,13.8 L3,12.8 Z" fill="#FFF4B0" stroke="#D8A010" stroke-width=".9" stroke-linejoin="round"/>
  <path d="M4.4,5 L8.2,4.4 L10,3.6 L10.6,1.6 L14.4,1.2 L14.5,11.3 L9.5,12.6 L5.2,14.6 Z" fill="url(#fo)" stroke="#D09810" stroke-width="1" stroke-linejoin="round"/>
</svg>

<div class="t" style="left:24.80px;top:7px;font-size:11px;line-height:12px;transform:scaleX(1.0459);color:#fff;font-weight:bold;">ANAGRAFICA ARTICOLI - 9876543244 - TEST LISTINO</div>
<div class="t" style="left:57.90px;top:28px;font-size:16px;line-height:17px;transform:scaleX(0.9900);color:#000;font-weight:bold;">ANAGRAFICA ARTICOLI - 9876543244 -</div>
<div class="t" style="left:33.70px;top:112px;font-size:12px;line-height:14px;transform:scaleX(0.8967);color:#000;">Salva (F12)</div>
<div class="t" style="left:131.77px;top:112px;font-size:12px;line-height:14px;transform:scaleX(0.8846);color:#000;">Stampa (F9)</div>
<div class="t" style="left:234.16px;top:112px;font-size:12px;line-height:14px;transform:scaleX(0.9429);color:#000;">Navigatore</div>
<div class="t" style="left:343.26px;top:112px;font-size:12px;line-height:14px;transform:scaleX(0.8868);color:#000;">Elimina</div>
<div class="t" style="left:449.80px;top:112px;font-size:12px;line-height:14px;transform:scaleX(0.9167);color:#000;">Altro</div>
<div class="t" style="left:530.31px;top:112px;font-size:12px;line-height:14px;transform:scaleX(0.8912);color:#000;">Uscita (ESC)</div>
<div class="t" style="left:48.48px;top:139px;font-size:12px;line-height:14px;transform:scaleX(0.9188);color:#000;">Note e descr.</div>
<div class="t" style="left:161.60px;top:139px;font-size:12px;line-height:14px;transform:scaleX(0.8981);color:#000;">Statistiche</div>
<div class="t" style="left:254.00px;top:139px;font-size:12px;line-height:14px;transform:scaleX(0.8831);color:#000;">Articoli collegati</div>
<div class="t" style="left:360.82px;top:139px;font-size:12px;line-height:14px;transform:scaleX(0.8763);color:#000;">Caratteristiche</div>
<div class="t" style="left:486.70px;top:139px;font-size:12px;line-height:14px;transform:scaleX(0.9708);color:#000;">Web</div>
<div class="t" style="left:590.00px;top:139px;font-size:12px;line-height:14px;transform:scaleX(0.8630);color:#000;">eBay</div>
<div class="t" style="left:38.54px;top:159px;font-size:12px;line-height:14px;transform:scaleX(0.8568);color:#000;">Ordini fornitori</div>
<div class="t" style="left:138.63px;top:159px;font-size:12px;line-height:14px;transform:scaleX(0.8718);color:#000;">Movimenti (F10)</div>
<div class="t" style="left:247.42px;top:159px;font-size:12px;line-height:14px;transform:scaleX(0.8822);color:#000;">Codici a barre</div>
<div class="t" style="left:358.39px;top:159px;font-size:12px;line-height:14px;transform:scaleX(0.9054);color:#000;">Documenti</div>
<div class="t" style="left:457.43px;top:159px;font-size:12px;line-height:14px;transform:scaleX(0.8714);color:#000;">Composizioni</div>
<div class="t" style="left:581.37px;top:159px;font-size:12px;line-height:14px;transform:scaleX(0.9273);color:#000;">Foto</div>
<div class="t" style="left:670.61px;top:159px;font-size:12px;line-height:14px;transform:scaleX(0.8898);color:#000;">Produzione</div>
<div class="t" style="left:27.70px;top:179px;font-size:12px;line-height:14px;transform:scaleX(0.8835);color:#000;">Anagrafica(F5)</div>
<div class="t" style="left:135.35px;top:179px;font-size:12px;line-height:14px;transform:scaleX(0.8544);color:#000;">Fornitori (F6)</div>
<div class="t" style="left:255.15px;top:179px;font-size:12px;line-height:14px;transform:scaleX(0.8531);color:#000;">Clienti</div>
<div class="t" style="left:327.32px;top:180px;font-size:12px;line-height:14px;transform:scaleX(0.9830);color:#000;font-weight:bold;-webkit-text-stroke:0.45px currentColor;">Listini di vendita</div>
<div class="t" style="left:455.04px;top:179px;font-size:12px;line-height:14px;transform:scaleX(0.9565);color:#000;">Quantita'</div>
<div class="t" style="left:550.13px;top:179px;font-size:12px;line-height:14px;transform:scaleX(0.8696);color:#000;">Unita' misura</div>
<div class="t" style="left:658.41px;top:179px;font-size:12px;line-height:14px;transform:scaleX(0.8938);color:#000;">Ordini clienti</div>
<div class="t" style="left:97.61px;top:203px;font-size:12px;line-height:14px;transform:scaleX(0.8929);color:#0000FF;">Listini di vendita</div>
<div class="t" style="left:341.79px;top:204px;font-size:12px;line-height:14px;transform:scaleX(1.0062);color:#0000FF;font-weight:bold;-webkit-text-stroke:0.45px currentColor;">Prezzi base</div>
<div class="t" style="left:545.61px;top:203px;font-size:12px;line-height:14px;transform:scaleX(0.8889);color:#0000FF;">Condizioni speciali di vendita</div>
<div class="t" style="left:185.91px;top:237px;font-size:12px;line-height:14px;transform:scaleX(0.8917);color:#000;">Prezzo MINIMO di acquisto</div>
<div class="t" style="left:532.00px;top:237px;font-size:12px;line-height:14px;transform:scaleX(0.8767);color:#000;">0,000</div>
<div class="t" style="left:185.91px;top:253px;font-size:12px;line-height:14px;transform:scaleX(0.8885);color:#000;">Prezzo MEDIO di acquisto</div>
<div class="t" style="left:532.00px;top:253px;font-size:12px;line-height:14px;transform:scaleX(0.8767);color:#000;">0,000</div>
<div class="t" style="left:185.92px;top:269px;font-size:12px;line-height:14px;transform:scaleX(0.8815);color:#000;">Prezzo MASSIMO di acquisto</div>
<div class="t" style="left:532.00px;top:269px;font-size:12px;line-height:14px;transform:scaleX(0.8767);color:#000;">0,000</div>
<div class="t" style="left:185.93px;top:285px;font-size:12px;line-height:14px;transform:scaleX(0.8660);color:#000;">Prezzo di acquisto fornitore primario</div>
<div class="t" style="left:532.00px;top:285px;font-size:12px;line-height:14px;transform:scaleX(0.8767);color:#000;">0,000</div>
<div class="t" style="left:185.94px;top:301px;font-size:12px;line-height:14px;transform:scaleX(0.8604);color:#000;">Prezzo medio a magazzino (FIFO)</div>
<div class="t" style="left:532.00px;top:301px;font-size:12px;line-height:14px;transform:scaleX(0.8767);color:#000;">0,000</div>
<div class="t" style="left:185.93px;top:317px;font-size:12px;line-height:14px;transform:scaleX(0.8703);color:#000;">Prezzo ultimo ordine a fornitore</div>
<div class="t" style="left:532.00px;top:317px;font-size:12px;line-height:14px;transform:scaleX(0.8767);color:#000;">0,000</div>
<div class="t" style="left:185.92px;top:333px;font-size:12px;line-height:14px;transform:scaleX(0.8790);color:#000;">Prezzo ultimo acquisto</div>
<div class="t" style="left:532.00px;top:333px;font-size:12px;line-height:14px;transform:scaleX(0.8767);color:#000;">0,000</div>
<div class="t" style="left:185.93px;top:349px;font-size:12px;line-height:14px;transform:scaleX(0.8711);color:#000;">Prezzo listino ufficiale</div>
<div class="t" style="left:525.30px;top:349px;font-size:12px;line-height:14px;transform:scaleX(0.9167);color:#000;">82,645</div>
<div class="t" style="left:193.74px;top:535px;font-size:12px;line-height:14px;transform:scaleX(0.8627);color:#000;">Cifre decimali prezzi base :</div>
<div class="t" style="left:386.40px;top:535px;font-size:12px;line-height:14px;transform:scaleX(1.1000);color:#000;">3</div>
<div class="t" style="left:456.61px;top:535px;font-size:12px;line-height:14px;transform:scaleX(0.8872);color:#000;">Ricalcola prezzi di base</div>
</body></html>
